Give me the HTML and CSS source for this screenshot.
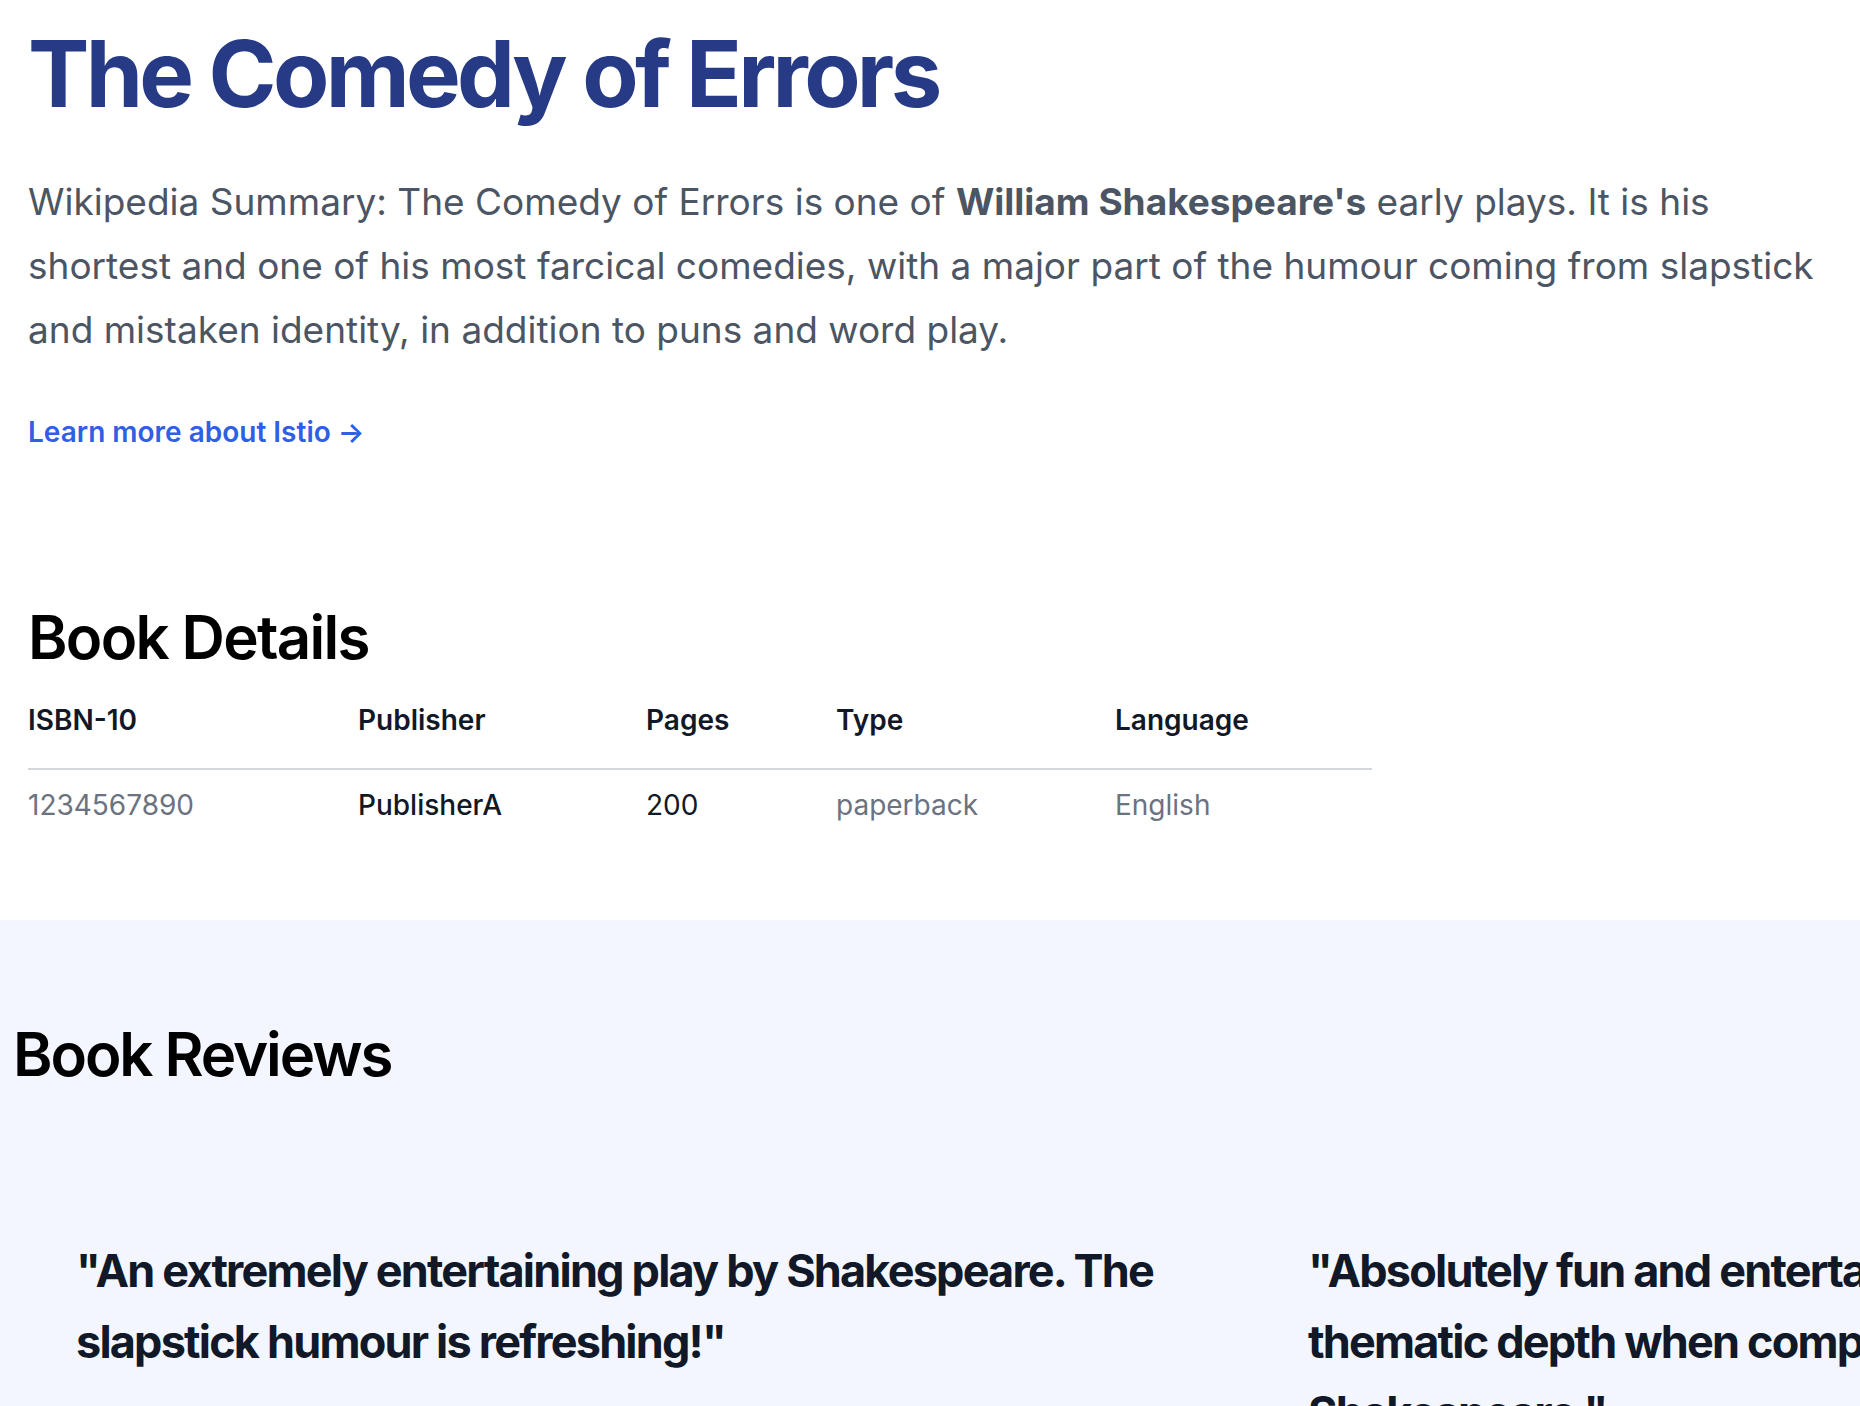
FILE: index.html
```html
<!DOCTYPE html>
<html lang="en">
<head>
<meta charset="utf-8">
<title>The Comedy of Errors</title>
<link rel="stylesheet" href="styles.css">
</head>
<body>
<main class="book">
  <h1 class="title">The Comedy of Errors</h1>
  <p class="summary">Wikipedia Summary: The Comedy of Errors is one of <b>William Shakespeare's</b> early plays. It is his shortest and one of his most farcical comedies, with a major part of the humour coming from slapstick and mistaken identity, in addition to puns and word play.</p>
  <a class="more" href="#">Learn more about Istio <span class="arrow">→</span></a>

  <section class="details">
    <h2 class="heading">Book Details</h2>
    <table class="details-table">
      <thead>
        <tr>
          <th class="c1">ISBN-10</th>
          <th class="c2">Publisher</th>
          <th class="c3">Pages</th>
          <th class="c4">Type</th>
          <th class="c5">Language</th>
        </tr>
      </thead>
      <tbody>
        <tr>
          <td class="muted">1234567890</td>
          <td class="strong">PublisherA</td>
          <td class="dark">200</td>
          <td class="muted">paperback</td>
          <td class="muted">English</td>
        </tr>
      </tbody>
    </table>
  </section>
</main>

<section class="reviews">
  <h2 class="heading reviews-heading">Book Reviews</h2>
  <div class="review-list">
    <blockquote class="review">"An extremely entertaining play by Shakespeare. The slapstick humour is refreshing!"</blockquote>
    <blockquote class="review">"Absolutely fun and entertaining. The play lacks thematic depth when compared to other plays by Shakespeare."</blockquote>
  </div>
</section>
</body>
</html>
```

FILE: styles.css
```css
* { box-sizing: border-box; }
html, body { margin: 0; padding: 0; }
body {
  font-family: Inter, "Noto Sans", sans-serif;
  background: #ffffff;
  color: #000;
  overflow: hidden;
}

.book {
  padding: 28px 28px 0 28px;
}

.title {
  margin: 0;
  font-size: 92px;
  line-height: 1;
  font-weight: 700;
  letter-spacing: -0.04em;
  color: #263a86;
}

.summary {
  margin: 50px 0 0 0;
  font-size: 37px;
  line-height: 64px;
  color: #4b5563;
}
.summary b { font-weight: 700; }

.more {
  display: inline-block;
  margin-top: 50px;
  font-size: 28px;
  line-height: 40px;
  font-weight: 600;
  color: #2f5fe3;
  text-decoration: none;
}

.details {
  padding-top: 155px;
  padding-bottom: 97px;
}

.heading {
  margin: 0;
  font-size: 60px;
  line-height: 60px;
  font-weight: 600;
  letter-spacing: -0.028em;
  color: #000;
}
.reviews-heading {
  letter-spacing: -0.035em;
}

.details-table {
  margin-top: 35px;
  border-collapse: collapse;
  width: 1344px;
  font-size: 28px;
  line-height: 36px;
  text-align: left;
}
.details-table th {
  font-weight: 600;
  color: #111827;
  padding: 0 0 30px 0;
  border-bottom: 2px solid #d4d7dc;
}
.details-table td {
  padding: 17px 0 0 0;
}
.c1 { width: 330px; }
.c2 { width: 288px; }
.c3 { width: 190px; }
.c4 { width: 279px; }
.c5 { width: 257px; }
.muted { color: #6b7280; }
.strong { color: #111827; font-weight: 500; }
.dark { color: #111827; }

.reviews {
  background: #f3f6fe;
  padding: 104px 0 0 13px;
  min-height: 600px;
}

.review-list {
  display: flex;
  margin-top: 151px;
  padding-left: 63px;
}
.review {
  flex: 0 0 1232px;
  width: 1232px;
  margin: 0;
  padding-right: 110px;
  font-size: 45px;
  line-height: 71px;
  font-weight: 700;
  letter-spacing: -0.04em;
  color: #111827;
}
```
